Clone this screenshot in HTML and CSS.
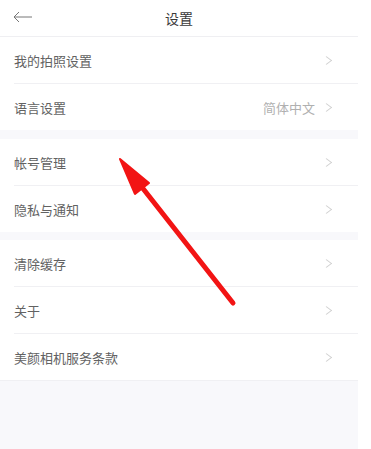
FILE: index.html
```html
<!DOCTYPE html>
<html lang="zh-CN">
<head>
<meta charset="utf-8">
<title>设置</title>
<link rel="stylesheet" href="styles.css">
</head>
<body>
<div class="page">
  <header class="header">
    <span class="back">
      <svg width="20" height="12" viewBox="0 0 20 12"><path d="M6 1 L1 6 L6 11 M1 6 H19" fill="none" stroke="#777" stroke-width="1"/></svg>
    </span>
    <span class="title">设置</span>
  </header>

  <section class="group">
    <div class="row"><span class="label">我的拍照设置</span><span class="chev"></span></div>
    <div class="row"><span class="label">语言设置</span><span class="value">简体中文</span><span class="chev"></span></div>
  </section>

  <section class="group">
    <div class="row"><span class="label">帐号管理</span><span class="chev"></span></div>
    <div class="row"><span class="label">隐私与通知</span><span class="chev"></span></div>
  </section>

  <section class="group last">
    <div class="row"><span class="label">清除缓存</span><span class="chev"></span></div>
    <div class="row"><span class="label">关于</span><span class="chev"></span></div>
    <div class="row"><span class="label">美颜相机服务条款</span><span class="chev"></span></div>
  </section>

  <svg class="pointer" width="371" height="449" viewBox="0 0 371 449">
    <line x1="141" y1="186" x2="233" y2="303" stroke="#f21414" stroke-width="5" stroke-linecap="round"/>
    <polygon points="120,159 149,183 135,194" fill="#f21414" stroke="#f21414" stroke-width="2" stroke-linejoin="round"/>
  </svg>
</div>
</body>
</html>
```

FILE: styles.css
```css
html, body {
  margin: 0;
  padding: 0;
  background: #ffffff;
}
body {
  font-family: "Noto Sans CJK SC", "Noto Sans", sans-serif;
  width: 371px;
  height: 449px;
  overflow: hidden;
}
.page {
  position: relative;
  width: 358px;
  height: 449px;
  background: #f8f8fb;
}
.header {
  height: 36px;
  background: #fff;
  border-bottom: 1px solid #efeff2;
  display: flex;
  align-items: center;
  justify-content: center;
  position: relative;
}
.back {
  position: absolute;
  left: 13px;
  top: 11px;
  display: flex;
}
.title {
  font-size: 14px;
  color: #3a3a3a;
}
.group {
  background: #fff;
  margin-bottom: 9px;
}
.group + .group {
  margin-bottom: 8px;
}
.group.last {
  border-bottom: 1px solid #f0f0f3;
}
.row {
  height: 46px;
  display: flex;
  align-items: center;
  margin-left: 14px;
  padding-right: 26px;
  border-bottom: 1px solid #f0f0f3;
}
.row:last-child {
  border-bottom: none;
}
.label {
  font-size: 13px;
  color: #626262;
  flex: 1;
}
.value {
  font-size: 13px;
  color: #b0b0b0;
  margin-right: 8px;
}
.chev {
  width: 6px;
  height: 6px;
  border-top: 1px solid #cfcfcf;
  border-right: 1px solid #cfcfcf;
  transform: rotate(45deg) skew(-8deg, -8deg);
  margin-right: 2px;
}
.pointer {
  position: absolute;
  left: 0;
  top: 0;
  pointer-events: none;
}
```
